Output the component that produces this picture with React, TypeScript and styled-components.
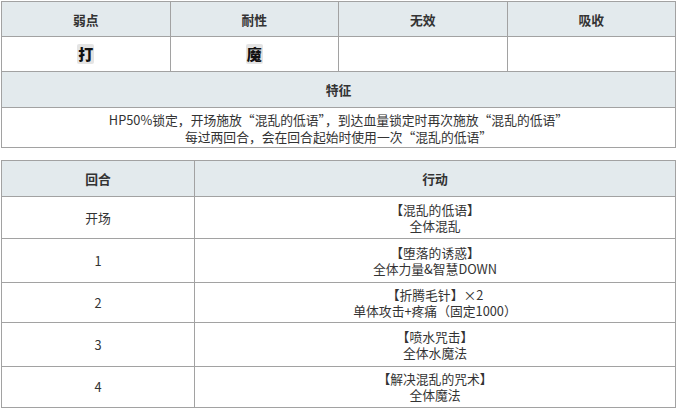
import React from "react";
import styled, { createGlobalStyle } from "styled-components";

const GlobalStyle = createGlobalStyle`
  body {
    margin: 0;
    background: #fff;
    font-family: "Noto Sans CJK SC", "Noto Sans", sans-serif;
    font-size: 12.8px;
    color: #333;
  }
`;

const Page = styled.div`
  padding: 1px 1px 0 1px;
  width: 675px;
`;

const Table = styled.table<{ $gap?: number }>`
  width: 675px;
  border-collapse: collapse;
  table-layout: fixed;
  margin-bottom: ${(p) => p.$gap ?? 0}px;
`;

const Th = styled.th<{ $h: number }>`
  height: ${(p) => p.$h}px;
  padding: 0;
  background: #e3eaed;
  border: 1px solid #a2a2a2;
  font-weight: bold;
  color: #333;
  text-align: center;
  vertical-align: middle;
  line-height: 17px;
`;

const Td = styled.td<{ $h: number }>`
  height: ${(p) => p.$h}px;
  padding: 0;
  border: 1px solid #a2a2a2;
  text-align: center;
  vertical-align: middle;
  line-height: 16px;
  color: #333;
`;

const Line = styled.div<{ $lh?: number }>`
  height: ${(p) => p.$lh ?? 16}px;
  line-height: ${(p) => p.$lh ?? 16}px;
  white-space: nowrap;
`;

const Badge = styled.span`
  display: inline-flex;
  align-items: center;
  justify-content: center;
  width: 17px;
  height: 20px;
  background: #e4e4e4;
  border-radius: 2px;
  font-weight: 900;
  font-size: 15px;
  color: #111;
  vertical-align: middle;
`;

const weak = [
  { label: "弱点", value: "打" },
  { label: "耐性", value: "魔" },
  { label: "无效", value: "" },
  { label: "吸收", value: "" },
];

const actions = [
  { turn: "开场", name: "【混乱的低语】", effect: "全体混乱", h: 41 },
  { turn: "1", name: "【堕落的诱惑】", effect: "全体力量&智慧DOWN", h: 43 },
  { turn: "2", name: "【折腾毛针】×2", effect: "单体攻击+疼痛（固定1000）", h: 39 },
  { turn: "3", name: "【喷水咒击】", effect: "全体水魔法", h: 43 },
  { turn: "4", name: "【解决混乱的咒术】", effect: "全体魔法", h: 40 },
];

export default function App() {
  return (
    <Page>
      <GlobalStyle />
      <Table $gap={12}>
        <tbody>
          <tr>
            {weak.map((w) => (
              <Th key={w.label} $h={34}>
                {w.label}
              </Th>
            ))}
          </tr>
          <tr>
            {weak.map((w) => (
              <Td key={w.label} $h={34}>
                {w.value && <Badge>{w.value}</Badge>}
              </Td>
            ))}
          </tr>
          <tr>
            <Th colSpan={4} $h={35}>
              特征
            </Th>
          </tr>
          <tr>
            <Td colSpan={4} $h={39}>
              <Line $lh={17}>HP50%锁定，开场施放“混乱的低语”，到达血量锁定时再次施放“混乱的低语”</Line>
              <Line $lh={17}>每过两回合，会在回合起始时使用一次“混乱的低语”</Line>
            </Td>
          </tr>
        </tbody>
      </Table>
      <Table>
        <colgroup>
          <col style={{ width: 193 }} />
          <col />
        </colgroup>
        <tbody>
          <tr>
            <Th $h={35}>回合</Th>
            <Th $h={35}>行动</Th>
          </tr>
          {actions.map((a) => (
            <tr key={a.turn}>
              <Td $h={a.h}>{a.turn}</Td>
              <Td $h={a.h}>
                <Line>{a.name}</Line>
                <Line>{a.effect}</Line>
              </Td>
            </tr>
          ))}
        </tbody>
      </Table>
    </Page>
  );
}
